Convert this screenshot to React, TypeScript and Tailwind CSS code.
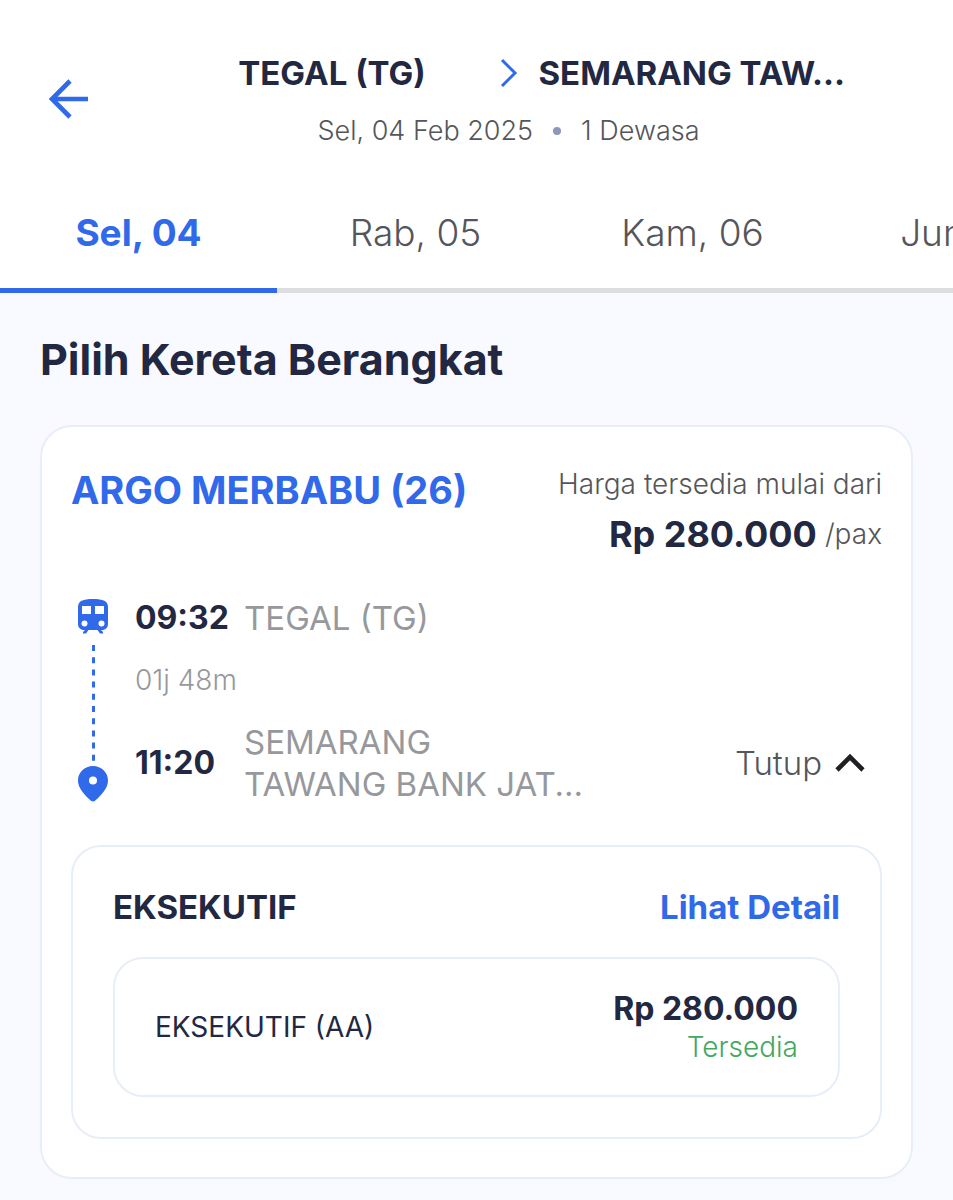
import { useState } from "react";

const dates = ["Sel, 04", "Rab, 05", "Kam, 06", "Jum, 07"];

function ArrowLeft() {
  return (
    <svg className="w-10 h-10" viewBox="0 0 40 40" fill="none" stroke="#3069ea" strokeWidth="4.6">
      <path d="M40 20H4M22 2L4 20l18 18" />
    </svg>
  );
}

function ChevronRight() {
  return (
    <svg className="w-5 h-8" viewBox="0 0 20 32" fill="none" stroke="#3069ea" strokeWidth="3">
      <path d="M3 3l13 13L3 29" />
    </svg>
  );
}

function ChevronUp() {
  return (
    <svg className="w-8 h-6" viewBox="0 0 32 24" fill="none" stroke="#202024" strokeWidth="4.6">
      <path d="M3 19L16 6l13 13" />
    </svg>
  );
}

function TrainIcon() {
  return (
    <svg className="w-[30px] h-9" viewBox="0 0 30 36" fill="#3069ea">
      <path
        fillRule="evenodd"
        d="M0 9C0 3 5 1 15 1s15 2 15 8v17c0 3.500-2.500 6-6 6h-1l2 2v1.500h-3L19.500 32h-9L8 35.500H5V34l2-2H6c-3.500 0-6-2.500-6-6zm4-1v8h9V8zm13 0v8h9V8zM6.500 22.500a3 3 0 1 0 0 6 3 3 0 0 0 0-6zm17 0a3 3 0 1 0 0 6 3 3 0 0 0 0-6z"
      />
    </svg>
  );
}

function PinIcon() {
  return (
    <svg className="w-[30px] h-9" viewBox="0 0 30 36" fill="#3069ea">
      <path
        fillRule="evenodd"
        d="M15 0C6.500 0 0 6.500 0 14.500 0 22 6 28.500 13 34.800q2 1.500 4 0C24 28.500 30 22 30 14.500 30 6.500 23.500 0 15 0zm0 10.500a4 4 0 1 1 0 8 4 4 0 0 1 0-8z"
      />
    </svg>
  );
}

export default function App() {
  const [active, setActive] = useState(0);
  const [open, setOpen] = useState(true);

  return (
    <div className="min-h-screen overflow-hidden bg-[#f8faff] pb-5 font-['Inter',sans-serif] text-[#222842]">
      {/* HEADER */}
      <header className="flex items-center bg-white pl-12 pr-6 pt-[53px]">
        <button type="button" aria-label="Kembali" className="pb-1">
          <ArrowLeft />
        </button>
        <div className="flex-1">
          <div className="mx-auto grid max-w-[646px] grid-cols-[minmax(0,1fr)_auto_minmax(0,1fr)] items-center gap-x-5 text-center">
            <h1 className="whitespace-nowrap text-[33px] leading-10 font-bold">TEGAL (TG)</h1>
            <ChevronRight />
            <p className="whitespace-nowrap text-[33px] leading-10 font-bold">SEMARANG TAW...</p>
          </div>
          <p className="mt-5 flex items-center justify-center gap-5 text-[27px] leading-9 font-light text-[#55565a]">
            <span>Sel, 04 Feb 2025</span>
            <span className="h-2 w-2 rounded-full bg-[#8b97bb]" />
            <span>1 Dewasa</span>
          </p>
        </div>
      </header>

      {/* DATES */}
      <nav className="flex overflow-hidden bg-white pt-6">
        {dates.map((date, i) => (
          <button
            key={date}
            type="button"
            onClick={() => setActive(i)}
            className={
              i === active
                ? "h-[120px] w-[277px] shrink-0 border-b-[5px] border-[#3069ea] pt-1 text-[37px] font-bold text-[#3069ea]"
                : "h-[120px] w-[277px] shrink-0 border-b-[5px] border-[#dddee0] pt-1 text-[37px] font-light text-[#55565a]"
            }
          >
            {date}
          </button>
        ))}
      </nav>

      <main className="px-10 pt-10">
        <h2 className="text-[43px] leading-[52px] font-bold">Pilih Kereta Berangkat</h2>

        {/* TRAIN CARD */}
        <section className="mt-10 rounded-[32px] border-2 border-[#e8eef8] bg-white px-[29px] pt-[37px] pb-[38px]">
          <div className="flex justify-between">
            <h3 className="text-[38px] leading-[52px] font-bold text-[#3069ea]">ARGO MERBABU (26)</h3>
            <div className="text-right text-[28px] font-light text-[#55565a]">
              <p className="leading-10">Harga tersedia mulai dari</p>
              <p className="mt-1 flex items-center justify-end gap-2 leading-[52px]">
                <strong className="text-[36px] font-bold text-[#222842]">Rp 280.000</strong>
                <span>/pax</span>
              </p>
            </div>
          </div>

          <div className="mt-[38px] flex items-center">
            <div className="flex w-11 flex-col items-center self-stretch">
              <TrainIcon />
              <svg className="mt-2 mb-1 h-[120px] w-[3px]" viewBox="0 0 3 120">
                <path d="M1.500 3v117" stroke="#3069ea" strokeWidth="3" strokeDasharray="6 6.200" />
              </svg>
              <PinIcon />
            </div>
            <div className="ml-5 flex-1">
              <div className="flex text-[33px] leading-10">
                <time className="w-[109px] text-[32px] font-bold">09:32</time>
                <span className="text-[#97989c]">TEGAL (TG)</span>
              </div>
              <p className="mt-6 mb-[23px] text-[28px] leading-9 font-light text-[#97989c]">01j 48m</p>
              <div className="flex items-center text-[33px] leading-[42px]">
                <time className="w-[109px] text-[32px] font-bold">11:20</time>
                <span className="whitespace-nowrap text-[#97989c]">
                  SEMARANG
                  <br />
                  TAWANG BANK JAT...
                </span>
                <button
                  type="button"
                  aria-expanded={open}
                  onClick={() => setOpen(!open)}
                  className="mr-4 ml-auto flex items-center gap-3 font-light text-[#55565a]"
                >
                  Tutup
                  <ChevronUp />
                </button>
              </div>
            </div>
          </div>

          {/* CLASS LIST */}
          {open && (
            <div className="mt-10 rounded-[30px] border-2 border-[#e8eef8] p-10">
              <div className="flex items-center justify-between text-[33px] leading-10 font-bold">
                <h4>EKSEKUTIF</h4>
                <a href="#detail" className="text-[#3069ea]">Lihat Detail</a>
              </div>
              <div className="mt-[30px] flex items-center justify-between rounded-[30px] border-2 border-[#e8eef8] px-10 py-[30px]">
                <span className="text-[28px]">EKSEKUTIF (AA)</span>
                <div className="text-right">
                  <p className="text-[32px] leading-10 font-bold">Rp 280.000</p>
                  <p className="text-[28px] leading-9 font-light text-[#44a85f]">Tersedia</p>
                </div>
              </div>
            </div>
          )}
        </section>
      </main>
    </div>
  );
}
